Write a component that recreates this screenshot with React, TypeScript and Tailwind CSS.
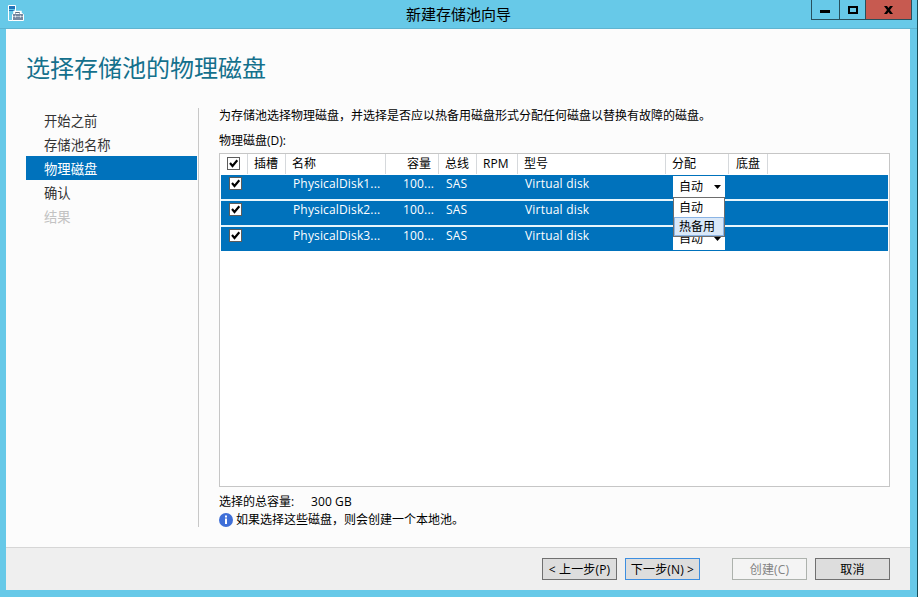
import type { ReactNode } from 'react';

type StepState = 'normal' | 'active' | 'disabled';

const STEPS: { label: string; state: StepState }[] = [
  { label: '开始之前', state: 'normal' },
  { label: '存储池名称', state: 'normal' },
  { label: '物理磁盘', state: 'active' },
  { label: '确认', state: 'normal' },
  { label: '结果', state: 'disabled' },
];

const DISKS = [
  { name: 'PhysicalDisk1...', capacity: '100...', bus: 'SAS', model: 'Virtual disk' },
  { name: 'PhysicalDisk2...', capacity: '100...', bus: 'SAS', model: 'Virtual disk' },
  { name: 'PhysicalDisk3...', capacity: '100...', bus: 'SAS', model: 'Virtual disk' },
];

// Row whose allocation combo is open, and the row its list covers completely.
const OPEN_ROW = 0;
const COVERED_ROW = 1;

// Shared by the header and every row so the columns line up.
const COLUMNS = 'grid grid-cols-[28px_38px_100px_53px_38px_41px_148px_63px_39px_1fr]';

const STEP_CLASS: Record<StepState, string> = {
  normal: 'text-[#333]',
  active: 'bg-[#0072bc] text-white',
  disabled: 'text-[#c3c3c3]',
};

export default function App() {
  return (
    <div className="flex h-[597px] w-[918px] flex-col overflow-hidden border-r border-[#164c56] bg-[#67c9e8] pb-[7px] font-['Open_Sans','Noto_Sans_CJK_SC',sans-serif] text-[12px] leading-[16px] text-black">
      <TitleBar />
      <div className="ml-[6px] flex min-h-0 w-[904px] flex-1 flex-col bg-[#fcfcfc]">
        <h1 className="pt-[21px] pl-[20px] text-[24px] leading-[36px] text-[#14708c]">
          选择存储池的物理磁盘
        </h1>
        <div className="mt-[22px] flex">
          <nav className="h-[419px] w-[193px] border-r border-[#c8c8c8] pl-[20px]">
            {STEPS.map((step) => (
              <div
                key={step.label}
                className={`h-[24px] w-[171px] pl-[18px] text-[13.33px] leading-[27px] ${STEP_CLASS[step.state]}`}
              >
                {step.label}
              </div>
            ))}
          </nav>
          <main className="ml-[20px] w-[671px]">
            <p className="leading-[15px]">
              为存储池选择物理磁盘，并选择是否应以热备用磁盘形式分配任何磁盘以替换有故障的磁盘。
            </p>
            <p className="mt-[10px] leading-[16px]">物理磁盘(D):</p>
            <DiskTable />
            <div className="mt-[6px] flex h-[18px] items-center">
              <span className="w-[92px]">选择的总容量:</span>
              <span className="tracking-[0.1px]">300 GB</span>
            </div>
            <div className="flex h-[18px] items-center gap-[3px]">
              <InfoIcon />
              <span>如果选择这些磁盘，则会创建一个本地池。</span>
            </div>
          </main>
        </div>
        <footer className="mt-auto flex h-[43px] border-t border-[#d6d6d6] bg-[#efefef] pt-[10px] pl-[536px]">
          <WizardButton className="border-[#707070] bg-[#dddddd]">&lt; 上一步(P)</WizardButton>
          <WizardButton className="ml-[8px] border-[#3c8ee0] bg-[#dddddd]">
            下一步(N) &gt;
          </WizardButton>
          <WizardButton className="ml-[32px] border-[#adb2ad] bg-[#f4f4f4] text-[#838383]">
            创建(C)
          </WizardButton>
          <WizardButton className="ml-[8px] border-[#707070] bg-[#dddddd]">取消</WizardButton>
        </footer>
      </div>
    </div>
  );
}

function TitleBar() {
  return (
    <header className="relative h-[29px] shrink-0 border-b border-[#5fb4d0]">
      <WizardIcon />
      <div className="pt-[4px] text-center text-[15px] leading-[20px]">新建存储池向导</div>
      <div className="absolute top-0 right-[5px] flex h-[20px] border-x border-b border-[#27505d]">
        <button type="button" className="grid w-[28px] place-items-center border-r border-[#27505d]">
          <span className="mt-[3px] mr-[2px] h-[3px] w-[10px] bg-black" />
        </button>
        <button type="button" className="grid w-[26px] place-items-center border-r border-[#27505d]">
          <span className="h-[8px] w-[10px] border-2 border-black" />
        </button>
        <button type="button" className="grid w-[45px] place-items-center bg-[#c75a50]">
          <svg className="h-[8px] w-[9px]" viewBox="0 0 9 8">
            <path d="M0 0h3l1.5 2L6 0h3L6 4l3 4H6L4.500 6 3 8H0l3-4z" />
          </svg>
        </button>
      </div>
    </header>
  );
}

function DiskTable() {
  return (
    <div className="mt-[4px] h-[334px] border border-[#c6c6c6] bg-white">
      <div className={`${COLUMNS} h-[20px] leading-[20px]`}>
        <HeaderCell className="pt-[3px] pl-[7px]">
          <CheckBox />
        </HeaderCell>
        <HeaderCell className="pl-[6px]">插槽</HeaderCell>
        <HeaderCell className="pl-[6px]">名称</HeaderCell>
        <HeaderCell className="pr-[7px] text-right">容量</HeaderCell>
        <HeaderCell className="pl-[6px]">总线</HeaderCell>
        <HeaderCell className="pl-[6px] tracking-[0.1px]">RPM</HeaderCell>
        <HeaderCell className="pl-[6px]">型号</HeaderCell>
        <HeaderCell className="pl-[6px]">分配</HeaderCell>
        <HeaderCell className="pl-[7px]">底盘</HeaderCell>
      </div>
      <div className="mx-px mt-px flex flex-col gap-[2px] bg-[#e8f6fc]">
        {DISKS.map((disk, i) => (
          <div key={disk.name} className="h-[24px] bg-[#0072bc] text-white">
            <div className={`${COLUMNS} -ml-px h-full leading-[18px]`}>
              <div className="pt-[2px] pl-[9px]">
                <CheckBox />
              </div>
              <div />
              <div className="pl-[7px] tracking-[0.15px]">{disk.name}</div>
              <div className="pr-[5px] text-right tracking-[0.15px]">{disk.capacity}</div>
              <div className="pl-[7px] tracking-[0.2px]">{disk.bus}</div>
              <div />
              <div className="pl-[7px] tracking-[0.2px]">{disk.model}</div>
              <div className="relative pt-px pl-[7px]">
                {i !== COVERED_ROW && <Combo value="自动" />}
                {i === OPEN_ROW && <ComboMenu />}
              </div>
            </div>
          </div>
        ))}
      </div>
    </div>
  );
}

function HeaderCell({ className = '', children }: { className?: string; children: ReactNode }) {
  return <div className={`border-r border-[#d6d9dc] ${className}`}>{children}</div>;
}

function Combo({ value }: { value: string }) {
  return (
    <div className="flex h-[22px] w-[52px] items-center justify-between bg-white pr-[4px] pl-[6px] text-black">
      <span>{value}</span>
      <svg className="h-[4px] w-[7px]" viewBox="0 0 7 4">
        <path d="M0 0h7L3.500 4z" />
      </svg>
    </div>
  );
}

// Opened list of the first row's combo, drops over the rows below.
function ComboMenu() {
  return (
    <div className="absolute top-[22px] left-[7px] z-10 h-[40px] w-[52px] border border-[#6d6d6d] bg-white text-black">
      <div className="h-[19px] pl-[5px] leading-[20px]">自动</div>
      <div className="h-[19px] border border-[#8bb4e4] bg-[#dae8f8] pl-[4px] leading-[17px]">热备用</div>
    </div>
  );
}

function CheckBox() {
  return (
    <svg className="block h-[13px] w-[13px]" viewBox="0 0 13 13">
      <rect x="0.500" y="0.500" width="12" height="12" fill="#fff" stroke="#5c5c5c" />
      <path d="M3 6L5.500 9L10.300 3.300" fill="none" stroke="#000" strokeWidth="2.100" />
    </svg>
  );
}

function WizardButton({ className, children }: { className: string; children: ReactNode }) {
  return (
    <button
      type="button"
      className={`h-[22px] w-[75px] border text-center leading-[21px] tracking-[0.15px] whitespace-nowrap ${className}`}
    >
      {children}
    </button>
  );
}

function InfoIcon() {
  return (
    <svg className="h-[14px] w-[14px]" viewBox="0 0 14 14">
      <circle cx="7" cy="7" r="7" fill="#3f6fd8" />
      <path d="M6 2.500h2v2H6zM6 5.500h2V11H6z" fill="#fff" />
    </svg>
  );
}

function WizardIcon() {
  return (
    <svg className="absolute top-[5px] left-[8px] h-[16px] w-[16px]" viewBox="0 0 16 16">
      {/* server tower */}
      <path d="M0.500 0.500h7v15h-7z" fill="#67c9e8" stroke="#fff" />
      <path d="M1 1h6v3H1z" fill="#2374b8" />
      <path d="M1 5.500h5" stroke="#2374b8" />
      {/* toolbox */}
      <path d="M6.500 9V7h6v2" fill="none" stroke="#fff" strokeWidth="2.500" />
      <path d="M4.500 9.500l1-1h9l1 1v6h-11z" fill="#7688a0" stroke="#fff" />
      <path d="M7.500 8.500v-1h4v1" fill="none" stroke="#5e7288" />
      <path d="M5 11.500h10" stroke="#b4c0cd" />
      <path d="M7.500 10.500v2M12.500 10.500v2" stroke="#e6ebf0" />
    </svg>
  );
}
